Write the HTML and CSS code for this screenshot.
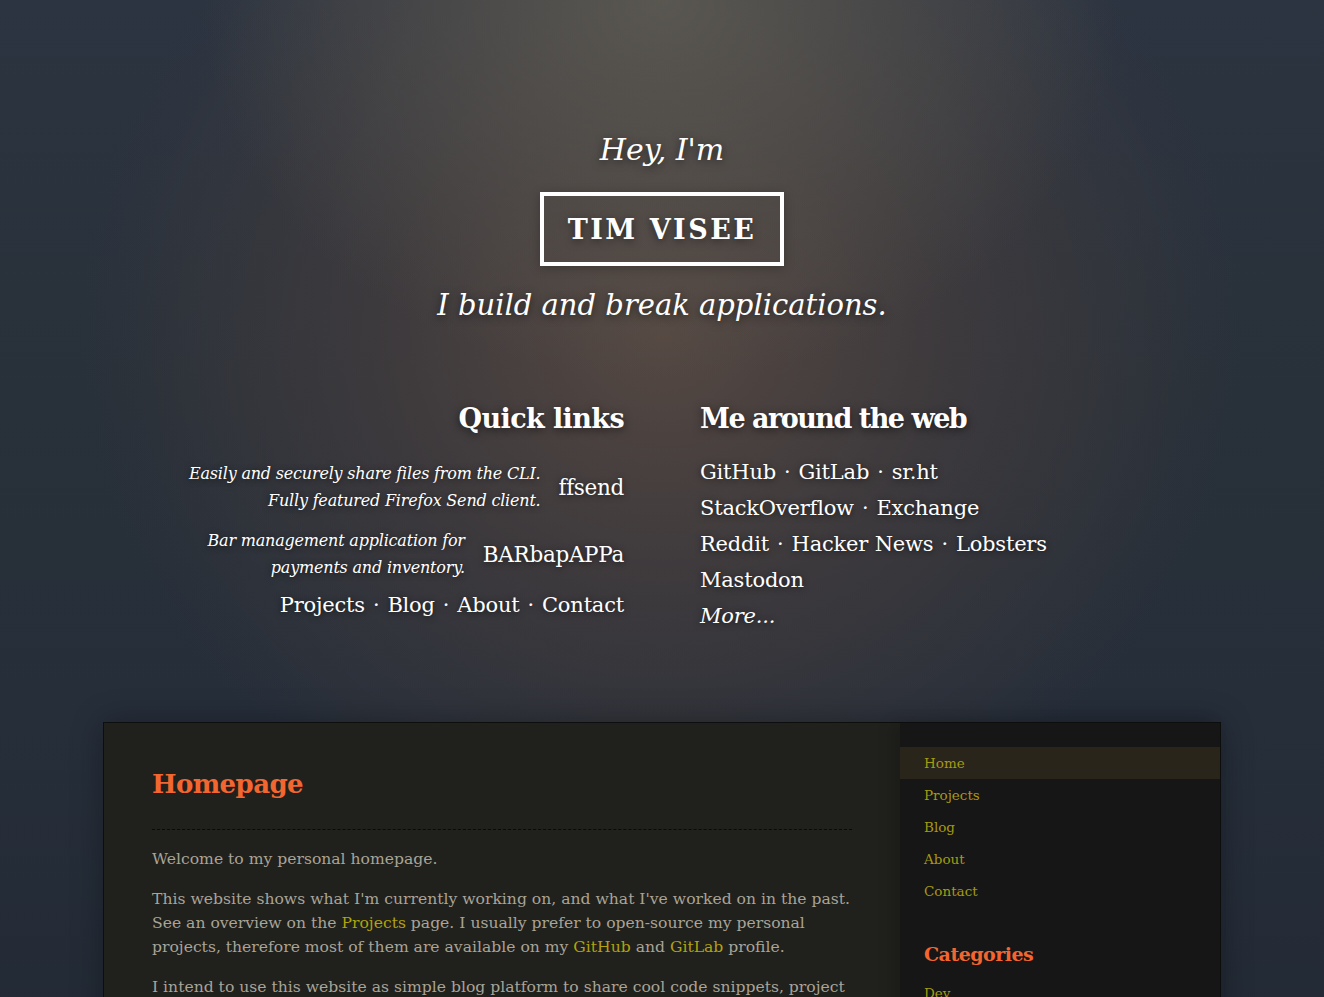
FILE: index.html
```html
<!DOCTYPE html>
<html lang="en">
<head>
<meta charset="utf-8">
<title>Tim Visée</title>
<link rel="stylesheet" href="styles.css">
</head>
<body>
<header class="hero">
  <p class="hey">Hey, I'm</p>
  <h1 class="name">TIM VISEE</h1>
  <p class="tagline">I build and break applications.</p>

  <div class="links">
    <section class="col col-left">
      <h2>Quick links</h2>
      <div class="proj">
        <span class="desc">Easily and securely share files from the CLI.<br>Fully featured Firefox Send client.</span>
        <a href="#" class="pname">ffsend</a>
      </div>
      <div class="proj">
        <span class="desc">Bar management application for<br>payments and inventory.</span>
        <a href="#" class="pname">BARbapAPPa</a>
      </div>
      <p class="line">
        <a href="#">Projects</a><span class="dot">·</span><a href="#">Blog</a><span class="dot">·</span><a href="#">About</a><span class="dot">·</span><a href="#">Contact</a>
      </p>
    </section>
    <section class="col col-right">
      <h2>Me around the web</h2>
      <p class="line"><a href="#">GitHub</a><span class="dot">·</span><a href="#">GitLab</a><span class="dot">·</span><a href="#">sr.ht</a></p>
      <p class="line"><a href="#">StackOverflow</a><span class="dot">·</span><a href="#">Exchange</a></p>
      <p class="line"><a href="#">Reddit</a><span class="dot">·</span><a href="#">Hacker News</a><span class="dot">·</span><a href="#">Lobsters</a></p>
      <p class="line"><a href="#">Mastodon</a></p>
      <p class="line"><a href="#" class="more">More...</a></p>
    </section>
  </div>
</header>

<div class="card">
  <main class="content">
    <h1 class="page-title">Homepage</h1>
    <p>Welcome to my personal homepage.</p>
    <p>This website shows what I'm currently working on, and what I've worked on in the past. See an overview on the <a href="#">Projects</a> page. I usually prefer to open-source my personal projects, therefore most of them are available on my <a href="#">GitHub</a> and <a href="#">GitLab</a> profile.</p>
    <p>I intend to use this website as simple blog platform to share cool code snippets, project updates and other things I find interesting.</p>
  </main>
  <aside class="sidebar">
    <nav class="menu">
      <a href="#" class="active">Home</a>
      <a href="#">Projects</a>
      <a href="#">Blog</a>
      <a href="#">About</a>
      <a href="#">Contact</a>
    </nav>
    <h3 class="side-title">Categories</h3>
    <nav class="menu">
      <a href="#">Dev</a>
    </nav>
  </aside>
</div>
</body>
</html>
```
FILE: styles.css
```css
html, body {
  margin: 0;
  padding: 0;
}
body {
  background-color: #27303b;
  background-image:
    radial-gradient(ellipse 460px 380px at 50% 0%, rgba(95, 92, 84, 0.85), rgba(95, 92, 84, 0) 100%),
    radial-gradient(ellipse 580px 540px at 50% 330px, #554842 0%, rgba(70, 62, 62, 0.75) 45%, rgba(42, 50, 62, 0) 100%),
    linear-gradient(#2c3441, #283039 400px, #262e3a 720px, #232a35);
  background-repeat: no-repeat;
  min-height: 997px;
  font-family: "DejaVu Serif", serif;
  color: #fff;
}
a {
  text-decoration: none;
  color: inherit;
}
.hero {
  text-align: center;
  padding-top: 128px;
  height: 594px;
}
.hey {
  margin: 0;
  font-style: italic;
  font-size: 30px;
  line-height: 44px;
  text-shadow: 0 2px 8px rgba(0, 0, 0, 0.6);
}
.name {
  display: inline-block;
  margin: 20px 0 0;
  border: 4px solid #fff;
  padding: 0 24px;
  height: 66px;
  line-height: 68px;
  font-family: "DejaVu Serif", serif;
  font-weight: bold;
  font-size: 27px;
  letter-spacing: 2.5px;
  box-shadow: 0 2px 10px rgba(0, 0, 0, 0.25);
  text-shadow: 0 2px 8px rgba(0, 0, 0, 0.5);
}
.tagline {
  margin: 16px 0 0;
  font-style: italic;
  font-size: 29px;
  line-height: 46px;
  text-shadow: 0 2px 8px rgba(0, 0, 0, 0.6);
}
.links {
  display: grid;
  grid-template-columns: 1fr 1fr;
  margin-top: 73px;
}
.col {
  padding: 0 38px;
}
.col-left {
  text-align: right;
}
.col-right {
  text-align: left;
}
.col h2 {
  margin: 0 0 17px;
  font-family: "DejaVu Serif", serif;
  font-size: 27px;
  font-weight: bold;
  letter-spacing: -1.5px;
  line-height: 36px;
  text-shadow: 0 2px 8px rgba(0, 0, 0, 0.6);
}
.col-left h2 {
  letter-spacing: -0.6px;
  margin-bottom: 23px;
}
.proj {
  display: flex;
  justify-content: flex-end;
  align-items: center;
  gap: 18px;
  margin-bottom: 13px;
}
.desc {
  font-style: italic;
  font-size: 16px;
  line-height: 27px;
  letter-spacing: -0.2px;
  text-shadow: 0 1px 6px rgba(0, 0, 0, 0.6);
}
.pname {
  font-family: "DejaVu Serif", serif;
  font-size: 21.5px;
  letter-spacing: -0.3px;
  text-shadow: 0 1px 6px rgba(0, 0, 0, 0.6);
}
.line {
  margin: 0;
  font-size: 21px;
  line-height: 36px;
  height: 36px;
  letter-spacing: -0.2px;
  text-shadow: 0 1px 6px rgba(0, 0, 0, 0.6);
}
.col-left .line {
  margin-top: -7px;
}
.dot {
  padding: 0 8px;
}
.more {
  font-style: italic;
}

.card {
  width: 1116px;
  margin: 0 auto;
  display: grid;
  grid-template-columns: 796px 320px;
  border: 1px solid #0d0e0e;
  background: #20201d;
  box-shadow: 0 0 30px rgba(0, 0, 0, 0.3);
}
.content {
  padding: 41px 48px 40px;
  color: #a9a497;
  font-family: "DejaVu Serif", serif;
  font-size: 15.6px;
  line-height: 24px;
}
.page-title {
  margin: 0;
  padding-bottom: 25px;
  border-bottom: 1px dashed #0a0a0a;
  color: #f4662f;
  font-size: 26px;
  line-height: 40px;
  letter-spacing: -0.6px;
  font-weight: bold;
}
.content p {
  margin: 16px 0 0;
}
.content p:first-of-type {
  margin-top: 17px;
}
.content a {
  color: #b2a20c;
}
.sidebar {
  background: #161616;
  padding: 24px 0 0;
  box-shadow: -8px 0 14px rgba(0, 0, 0, 0.15);
}
.menu {
  display: flex;
  flex-direction: column;
}
.menu a {
  display: block;
  padding: 0 24px;
  height: 32px;
  line-height: 32px;
  color: #a59a12;
  font-size: 13.5px;
}
.menu a.active {
  background: #29251a;
}
.side-title {
  margin: 34px 24px 10px;
  color: #f4662f;
  font-size: 19px;
  line-height: 26px;
  letter-spacing: -0.5px;
  font-weight: bold;
}
```
